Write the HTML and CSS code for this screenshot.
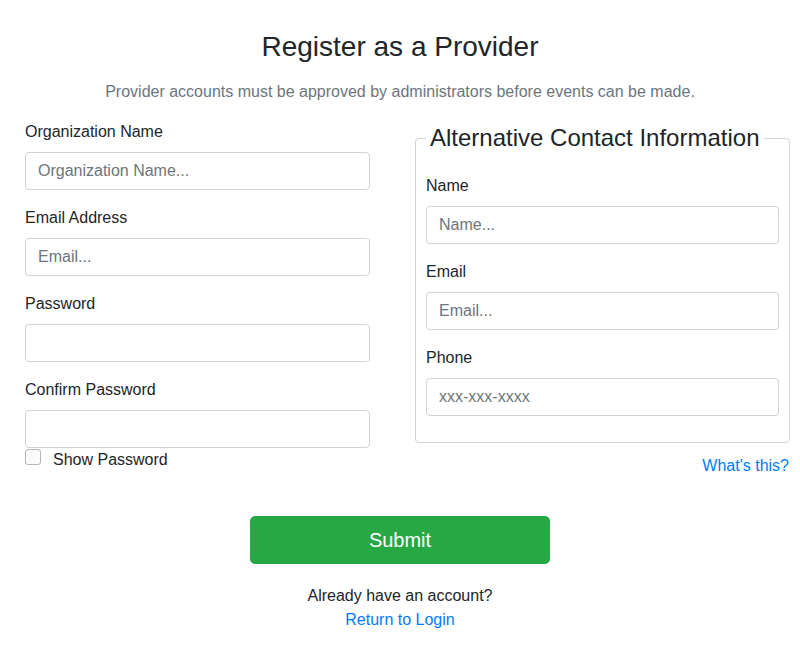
FILE: index.html
```html
<!DOCTYPE html>
<html lang="en">
<head>
<meta charset="utf-8">
<title>Register as a Provider</title>
<link rel="stylesheet" href="styles.css">
</head>
<body>
<main class="page">
  <h1 class="title">Register as a Provider</h1>
  <p class="subtitle">Provider accounts must be approved by administrators before events can be made.</p>
  <form class="form">
    <div class="columns">
      <div class="col-left">
        <div class="group">
          <label class="label" for="org">Organization Name</label>
          <input class="input" id="org" type="text" placeholder="Organization Name...">
        </div>
        <div class="group">
          <label class="label" for="email">Email Address</label>
          <input class="input" id="email" type="email" placeholder="Email...">
        </div>
        <div class="group">
          <label class="label" for="pw">Password</label>
          <input class="input" id="pw" type="password">
        </div>
        <div class="group group-last">
          <label class="label" for="pw2">Confirm Password</label>
          <input class="input" id="pw2" type="password">
        </div>
        <label class="check">
          <input class="checkbox" type="checkbox">
          <span>Show Password</span>
        </label>
      </div>
      <div class="col-right">
        <fieldset class="fieldset">
          <legend class="legend">Alternative Contact Information</legend>
          <div class="group">
            <label class="label" for="cname">Name</label>
            <input class="input" id="cname" type="text" placeholder="Name...">
          </div>
          <div class="group">
            <label class="label" for="cemail">Email</label>
            <input class="input" id="cemail" type="email" placeholder="Email...">
          </div>
          <div class="group">
            <label class="label" for="cphone">Phone</label>
            <input class="input" id="cphone" type="tel" placeholder="xxx-xxx-xxxx">
          </div>
        </fieldset>
        <div class="whats"><a class="link" href="#">What's this?</a></div>
      </div>
    </div>
    <div class="actions">
      <button class="submit" type="button">Submit</button>
      <p class="already">Already have an account?</p>
      <a class="link" href="#">Return to Login</a>
    </div>
  </form>
</main>
</body>
</html>
```

FILE: styles.css
```css
* { box-sizing: border-box; }

html, body {
  margin: 0;
  padding: 0;
  background: #fff;
}

body {
  font-family: "Liberation Sans", Arial, sans-serif;
  font-size: 16px;
  line-height: 1.5;
  color: #212529;
}

.page {
  padding: 30px 0 0;
}

.title {
  margin: 0 0 16px;
  font-size: 28px;
  font-weight: 400;
  line-height: 34px;
  text-align: center;
}

.subtitle {
  margin: 0 0 16px;
  color: #6c757d;
  text-align: center;
  line-height: 24px;
}

.columns {
  display: flex;
  gap: 45px;
  align-items: flex-start;
  padding-left: 25px;
}

.col-left {
  width: 345px;
}

.col-right {
  width: 375px;
}

.group {
  margin-bottom: 16px;
}

.group-last {
  margin-bottom: 0;
}

.label {
  display: block;
  margin-bottom: 8px;
  line-height: 24px;
}

.input {
  display: block;
  width: 100%;
  height: 38px;
  padding: 6px 12px;
  font-family: inherit;
  font-size: 16px;
  line-height: 24px;
  color: #495057;
  background: #fff;
  border: 1px solid #ced4da;
  border-radius: 4px;
  outline: none;
}

.input::placeholder {
  color: #6c757d;
  opacity: 1;
}

.check {
  display: flex;
  align-items: flex-start;
  gap: 12px;
  line-height: 24px;
}

.checkbox {
  appearance: none;
  -webkit-appearance: none;
  width: 16px;
  height: 16px;
  margin: 1px 0 0;
  border: 1px solid #b9b4ae;
  border-radius: 3px;
  background: #fbfbfb;
  flex: none;
}

.fieldset {
  margin: 0;
  padding: 10px 10px 10px;
  border: 1px solid #ced4da;
  border-radius: 4px;
  min-width: 0;
}

.legend {
  width: auto;
  padding: 0 4px;
  margin-bottom: 8px;
  font-size: 24px;
  line-height: 36px;
}

.whats {
  margin-top: 11px;
  text-align: right;
  padding-right: 1px;
  line-height: 24px;
}

.link {
  color: #007bff;
  text-decoration: none;
}

.actions {
  margin-top: 38px;
  display: flex;
  flex-direction: column;
  align-items: center;
}

.submit {
  width: 300px;
  height: 48px;
  padding: 8px 16px;
  font-family: inherit;
  font-size: 20px;
  line-height: 30px;
  color: #fff;
  background: #28a745;
  border: 1px solid #28a745;
  border-radius: 4.8px;
}

.already {
  margin: 20px 0 0;
  line-height: 24px;
}
```
